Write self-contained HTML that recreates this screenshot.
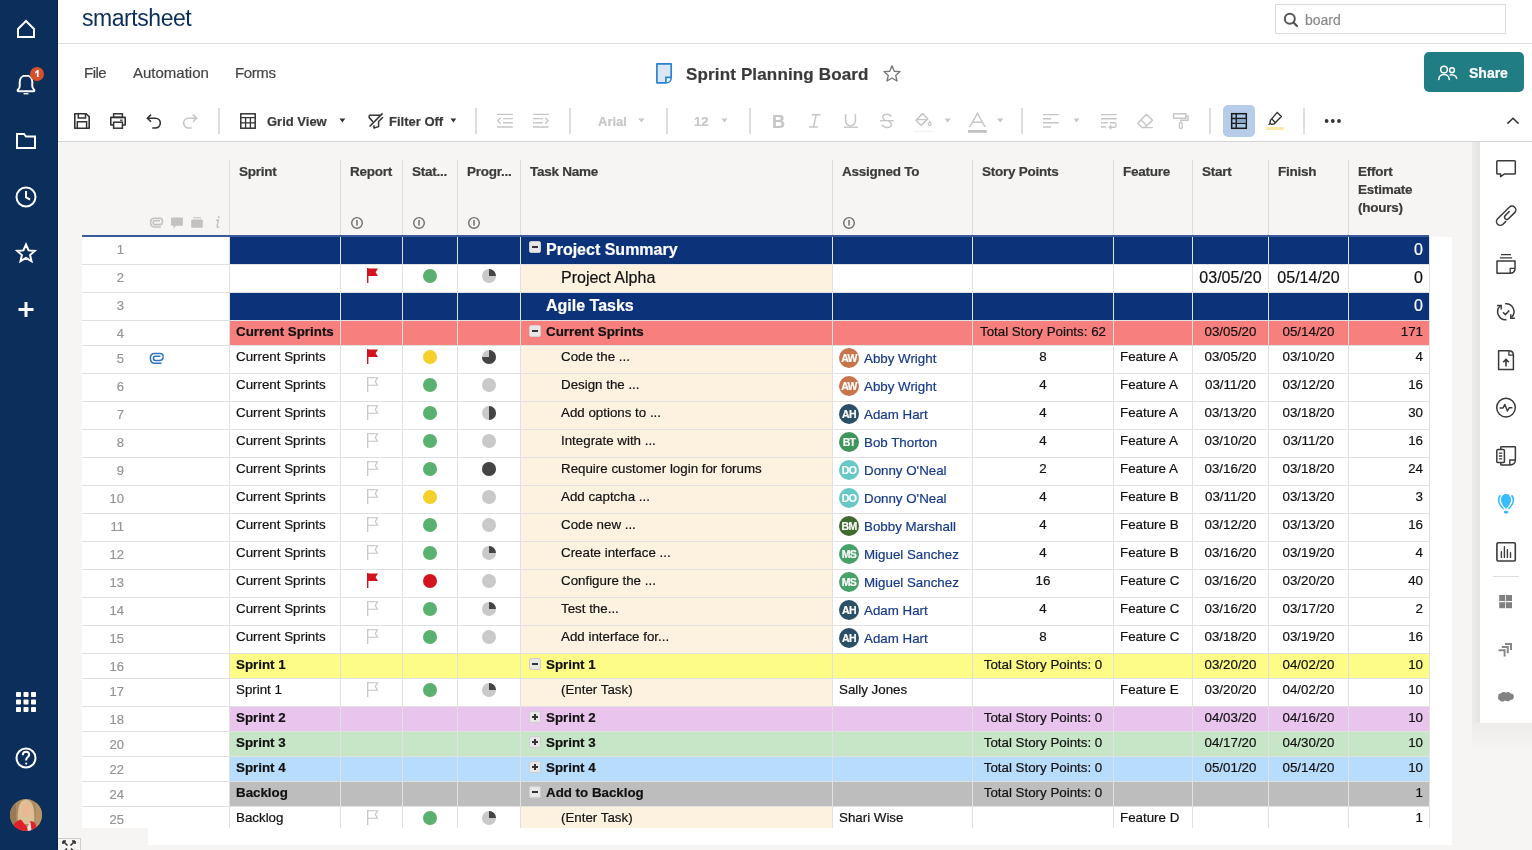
<!DOCTYPE html><html><head><meta charset="utf-8"><title>Sprint Planning Board</title><style>
*{margin:0;padding:0;box-sizing:border-box}
html,body{width:1532px;height:850px;overflow:hidden}
body{position:relative;background:#f6f5f3;font-family:"Liberation Sans",sans-serif;}
.a{position:absolute;display:block}
.t{position:absolute;white-space:nowrap;will-change:transform;-webkit-text-stroke:0.2px currentColor}
</style></head><body>
<div class="a" style="left:0px;top:0px;width:58px;height:850px;background:#0c2e5b;"></div>
<div class="a" style="left:57px;top:0px;width:1px;height:850px;background:#08244c;"></div>
<div class="a" style="left:58px;top:142px;width:1px;height:708px;background:#fdfdfd;"></div>
<svg class="a" style="left:0px;top:0px;" width="58" height="330" viewBox="0 0 58 330">
<path d="M18 29 L26 21 L34 29 L34 37 L18 37 Z" fill="none" stroke="#fff" stroke-width="2" stroke-linejoin="miter"/>
<path d="M26 75.6 C22.4 75.6 19.7 78.3 19.7 82 V86.2 C19.7 87.6 19 88.7 17.9 89.7 C17.3 90.3 17.7 91.3 18.5 91.3 H33.5 C34.3 91.3 34.7 90.3 34.1 89.7 C33 88.7 32.3 87.6 32.3 86.2 V82 C32.3 78.3 29.6 75.6 26 75.6 Z" fill="none" stroke="#fff" stroke-width="2" stroke-linejoin="miter" stroke-width="1.6"/>
<path d="M23.6 93.7 H28.4" stroke="#fff" stroke-width="1.4"/>
<circle cx="37" cy="74" r="7" fill="#d6512b"/><path d="M35.2 71.9 L37.2 70.1 H38.6 V77 H36.9 V72.6 L35.2 73.4 Z" fill="#fff"/>
<path d="M17 134 L24 134 L26 136.5 L35 136.5 L35 148 L17 148 Z" fill="none" stroke="#fff" stroke-width="2" stroke-linejoin="miter" stroke-width="1.8"/>
<circle cx="26" cy="197" r="9.5" fill="none" stroke="#fff" stroke-width="2" stroke-linejoin="miter" stroke-width="1.8"/>
<path d="M26 191 L26 197.5 L30 199.5" fill="none" stroke="#fff" stroke-width="2" stroke-linejoin="miter" stroke-width="1.8"/>
<path d="M26 244.5 L28.6 250.4 L34.8 250.9 L30.1 255 L31.5 261.2 L26 257.9 L20.5 261.2 L21.9 255 L17.2 250.9 L23.4 250.4 Z" fill="none" stroke="#fff" stroke-width="2" stroke-linejoin="miter" stroke-width="1.7"/>
<path d="M26 302 L26 317 M18.5 309.5 L33.5 309.5" stroke="#fff" stroke-width="3"/>
</svg>
<svg class="a" style="left:0px;top:0px;" width="58" height="850" viewBox="0 0 58 850"><rect x="16.0" y="692.0" width="5" height="5" rx="0.8" fill="#fff"/><rect x="16.0" y="699.5" width="5" height="5" rx="0.8" fill="#fff"/><rect x="16.0" y="707.0" width="5" height="5" rx="0.8" fill="#fff"/><rect x="23.5" y="692.0" width="5" height="5" rx="0.8" fill="#fff"/><rect x="23.5" y="699.5" width="5" height="5" rx="0.8" fill="#fff"/><rect x="23.5" y="707.0" width="5" height="5" rx="0.8" fill="#fff"/><rect x="31.0" y="692.0" width="5" height="5" rx="0.8" fill="#fff"/><rect x="31.0" y="699.5" width="5" height="5" rx="0.8" fill="#fff"/><rect x="31.0" y="707.0" width="5" height="5" rx="0.8" fill="#fff"/>
<circle cx="26" cy="758" r="9.5" fill="none" stroke="#fff" stroke-width="2" stroke-linejoin="miter" stroke-width="1.8"/>
<path d="M22.8 755.2 C22.8 753 24.2 751.8 26 751.8 C27.8 751.8 29.2 753 29.2 754.8 C29.2 756.8 26.2 757.2 26.2 759.6 L26.2 760.4" fill="none" stroke="#fff" stroke-width="2" stroke-linejoin="miter" stroke-width="1.8"/>
<circle cx="26.2" cy="763.6" r="1.1" fill="#fff"/>
<defs><clipPath id="av"><circle cx="26" cy="815" r="16"/></clipPath></defs>
<g clip-path="url(#av)">
<rect x="10" y="799" width="32" height="32" fill="#ad8a5f"/>
<rect x="10" y="799" width="6" height="32" fill="#9a7a55"/>
<rect x="36" y="799" width="6" height="32" fill="#b99468"/>
<path d="M18 824 C17 811 18.5 800 26 799.5 C33.5 800 35 811 34 824 Z" fill="#dcc096"/>
<ellipse cx="26.6" cy="810" rx="4.6" ry="7" fill="#e8b894"/>
<path d="M11 832 C12 825 16 820.5 21 819.5 L27.2 827.5 L30.2 821 C33.5 820.5 36.5 823.5 38 832 Z" fill="#e2202c"/>
<path d="M27.2 827.5 L30.2 821 L31.8 832 L28 832 Z" fill="#efe6dd"/>
</g>
</svg>
<div class="a" style="left:58px;top:0px;width:1474px;height:43px;background:#fff;"></div>
<div class="a" style="left:58px;top:43px;width:1474px;height:1px;background:#dedede;"></div>
<div class="t" style="left:82px;top:7px;font-size:23px;line-height:23px;font-weight:400;color:#0c2e5b;letter-spacing:-0.45px;-webkit-text-stroke:0;">smartsheet</div>
<div class="a" style="left:1275px;top:4px;width:231px;height:30px;border:1px solid #dcdcdc;background:#fff"></div>
<svg class="a" style="left:1283px;top:12px;" width="16" height="16" viewBox="0 0 16 16"><circle cx="6.8" cy="6.8" r="5" fill="none" stroke="#555" stroke-width="2"/><path d="M10.5 10.5 L14 14" stroke="#555" stroke-width="2.2" stroke-linecap="round"/></svg>
<div class="t" style="left:1305px;top:13px;font-size:14px;line-height:14px;font-weight:400;color:#8a8a8a;">board</div>
<div class="a" style="left:58px;top:44px;width:1474px;height:97px;background:#fff;"></div>
<div class="a" style="left:58px;top:141px;width:1474px;height:1px;background:#d4d4d4;"></div>
<div class="t" style="left:83.5px;top:65px;font-size:15px;line-height:15px;font-weight:400;color:#444;letter-spacing:-0.5px;">File</div>
<div class="t" style="left:132.5px;top:65px;font-size:15px;line-height:15px;font-weight:400;color:#444;">Automation</div>
<div class="t" style="left:234.5px;top:65px;font-size:15px;line-height:15px;font-weight:400;color:#444;letter-spacing:-0.4px;">Forms</div>
<svg class="a" style="left:650px;top:58px;" width="30" height="30" viewBox="0 0 30 30"><path d="M6.9 5.9 H21.2 V19 Q21.2 24.8 15.5 24.8 H6.9 Z" fill="#dbe6f6" stroke="#2b82d0" stroke-width="1.7" stroke-linejoin="round"/><path d="M16.6 20.2 H20.5 Q20.1 23.9 16.6 24 Z" fill="#fff"/><path d="M15.9 24.8 V19.4 H21.2" fill="none" stroke="#2b82d0" stroke-width="1.6"/></svg>
<div class="t" style="left:685.5px;top:66px;font-size:17px;line-height:17px;font-weight:700;color:#3a3a3a;letter-spacing:0.15px;">Sprint Planning Board</div>
<svg class="a" style="left:882px;top:64px;" width="20" height="20" viewBox="0 0 20 20"><path d="M10 1.8 L12.3 7.2 L18 7.6 L13.7 11.4 L15 17 L10 14 L5 17 L6.3 11.4 L2 7.6 L7.7 7.2 Z" fill="none" stroke="#777" stroke-width="1.4" stroke-linejoin="round"/></svg>
<div class="a" style="left:1424px;top:52px;width:100px;height:40px;border-radius:5px;background:#217d84"></div>
<svg class="a" style="left:1437px;top:63.5px;" width="24" height="18" viewBox="0 0 24 18"><circle cx="7" cy="5.6" r="3.3" fill="none" stroke="#fff" stroke-width="1.5"/><circle cx="15" cy="6.2" r="2.4" fill="none" stroke="#fff" stroke-width="1.5"/><path d="M1.8 15.6 C1.8 12.4 4.2 10.6 7 10.6 C9.8 10.6 12.2 12.4 12.2 15.6" fill="none" stroke="#fff" stroke-width="1.5" stroke-linecap="round"/><path d="M13.2 10.9 C16 10.5 19 11.8 19.8 14.3" fill="none" stroke="#fff" stroke-width="1.5" stroke-linecap="round"/></svg>
<div class="t" style="left:1469px;top:66px;font-size:14px;line-height:14px;font-weight:700;color:#fff;">Share</div>
<!--TOOLBAR-->
<svg class="a" style="left:0px;top:0px;" width="1532" height="142" viewBox="0 0 1532 142">
<path d="M74.8 113.8 H86.2 L89.2 116.8 V128.2 H74.8 Z" fill="none" stroke="#333" stroke-width="1.6" stroke-linejoin="round"/>
<path d="M78.3 113.8 V118 H85.5 V113.8" fill="none" stroke="#333" stroke-width="1.5"/>
<path d="M77.3 128.2 V121.8 H86.6 V128.2" fill="none" stroke="#333" stroke-width="1.5"/>
<rect x="113.6" y="113.8" width="8.8" height="3.6" fill="none" stroke="#333" stroke-width="1.5"/>
<path d="M113.2 125 H110.8 V117.4 H125.2 V125 H122.8" fill="none" stroke="#333" stroke-width="1.6" stroke-linejoin="round"/>
<rect x="113.6" y="122.2" width="8.8" height="6" fill="none" stroke="#333" stroke-width="1.5"/>
<path d="M120 120.2 H122.6" stroke="#333" stroke-width="1.2"/>
<path d="M147.6 118.2 H155.4 A4.9 4.9 0 0 1 155.4 128 H152.2" fill="none" stroke="#333" stroke-width="1.6"/>
<path d="M151 114.6 L147.4 118.2 L151 121.8" fill="none" stroke="#333" stroke-width="1.6"/>
<path d="M196.4 118.2 H188.6 A4.9 4.9 0 0 0 188.6 128 H191.8" fill="none" stroke="#c6c6c6" stroke-width="1.6"/>
<path d="M193 114.6 L196.6 118.2 L193 121.8" fill="none" stroke="#c6c6c6" stroke-width="1.6"/>
<rect x="240.8" y="113.8" width="14.4" height="14.4" fill="none" stroke="#333" stroke-width="1.5"/>
<path d="M240.8 117.6 H255.2 M240.8 122.9 H255.2 M245.6 117.6 V128.2 M250.4 117.6 V128.2" stroke="#333" stroke-width="1.3"/>
<path d="M339.5 118.5 H345.3 L342.4 122.4 Z" fill="#333"/>
<path d="M369.2 115.2 H380" fill="none" stroke="#333" stroke-width="1.5"/>
<path d="M369.2 115.2 V117.6 L373 121.8" fill="none" stroke="#333" stroke-width="1.5"/>
<path d="M369.6 126.5 L382.6 113.4" stroke="#333" stroke-width="1.5"/>
<path d="M382.6 117 V117.5 L378.6 121.6 V126.6 L374 128 V125.2" fill="none" stroke="#333" stroke-width="1.5" stroke-linejoin="round"/>
<path d="M450.5 118.5 H456.3 L453.4 122.4 Z" fill="#333"/>
<path d="M497 114.4 H512.8 M503 118.6 H512.8 M503 122.8 H512.8 M497 127 H512.8" stroke="#c6c6c6" stroke-width="1.4"/>
<path d="M500.6 117.6 L497.8 120.7 L500.6 123.8" fill="none" stroke="#c6c6c6" stroke-width="1.4"/>
<path d="M533 114.4 H548.8 M533 118.6 H542.8 M533 122.8 H542.8 M533 127 H548.8" stroke="#c6c6c6" stroke-width="1.4"/>
<path d="M545.2 117.6 L548 120.7 L545.2 123.8" fill="none" stroke="#c6c6c6" stroke-width="1.4"/>
<path d="M638.3 118.5 H644.5 L641.4 122.4 Z" fill="#c6c6c6"/>
<path d="M721.5 118.5 H727.5 L724.5 122.4 Z" fill="#c6c6c6"/>
<path d="M811.8 114.8 H820.6 M809 127 H817.8 M816.2 114.8 L813.4 127" stroke="#c6c6c6" stroke-width="1.4"/>
<path d="M845.6 114.2 V120.8 A4.9 4.9 0 0 0 855.4 120.8 V114.2" fill="none" stroke="#c6c6c6" stroke-width="1.5"/>
<path d="M843.8 127.2 H857.9" stroke="#c6c6c6" stroke-width="1.4"/>
<path d="M891.2 116.6 C890.4 115 888.9 114.3 886.9 114.3 C884.4 114.3 882.8 115.5 882.8 117.3 C882.8 118.6 883.6 119.4 885 120" fill="none" stroke="#c6c6c6" stroke-width="1.5"/>
<path d="M888.5 121.4 C890.6 122.1 891.4 123.1 891.4 124.4 C891.4 126.3 889.6 127.4 887 127.4 C884.6 127.4 883 126.5 882.2 124.7" fill="none" stroke="#c6c6c6" stroke-width="1.5"/>
<path d="M880 120.7 H893.7" stroke="#c6c6c6" stroke-width="1.4"/>
<path d="M922.6 113.6 L916 120.2 L921.2 125.4 L927.8 118.8 Z" fill="none" stroke="#c6c6c6" stroke-width="1.5" stroke-linejoin="round"/>
<path d="M916.6 119.6 H927.6" stroke="#c6c6c6" stroke-width="1.3"/>
<path d="M929.8 121.4 C929 122.8 928.6 123.6 928.6 124.4 A1.2 1.2 0 0 0 931 124.4 C931 123.6 930.6 122.8 929.8 121.4 Z" fill="none" stroke="#c6c6c6" stroke-width="1.2"/>
<path d="M915 131.4 H933" stroke="#ececec" stroke-width="1.3" stroke-dasharray="1.5 1"/>
<path d="M944.6 118.5 H950.6 L947.6 122.4 Z" fill="#c6c6c6"/>
<path d="M969.6 127 L977.4 113.4 L985.2 127 M972.6 122.2 H982.2" fill="none" stroke="#c6c6c6" stroke-width="1.5"/>
<rect x="968" y="130" width="18.8" height="2.8" fill="#c2c2c2"/>
<path d="M997 118.5 H1003.4 L1000.2 122.4 Z" fill="#c6c6c6"/>
<path d="M1043 114.6 H1058.8 M1043 118.7 H1051 M1043 122.8 H1058.8 M1043 127 H1051" stroke="#c6c6c6" stroke-width="1.4"/>
<path d="M1073.7 118.5 H1079.3 L1076.5 122.4 Z" fill="#c6c6c6"/>
<path d="M1101 114.6 H1116.8 M1101 118.7 H1116.8 M1101 122.8 H1107.6 M1101 127 H1106" stroke="#c6c6c6" stroke-width="1.4"/>
<path d="M1110 122.8 H1114 A2.2 2.2 0 0 1 1114 127.2 H1109.4" fill="none" stroke="#c6c6c6" stroke-width="1.4"/>
<path d="M1111.4 125.2 L1109.2 127.2 L1111.4 129.2" fill="none" stroke="#c6c6c6" stroke-width="1.3"/>
<path d="M1146.4 114.2 L1152.4 120.2 L1144.6 127.6 H1142 L1137.8 123.2 Z" fill="none" stroke="#c6c6c6" stroke-width="1.5" stroke-linejoin="round"/>
<path d="M1140.8 119.6 L1146.4 125.4 M1144.6 127.6 H1152.8" stroke="#c6c6c6" stroke-width="1.4"/>
<rect x="1173.6" y="113.8" width="12.2" height="4.4" fill="none" stroke="#c6c6c6" stroke-width="1.5"/>
<path d="M1185.8 116 H1188 V120.2 H1180.8 V122.6" fill="none" stroke="#c6c6c6" stroke-width="1.4"/>
<rect x="1179.4" y="122.8" width="2.8" height="5.6" rx="0.8" fill="none" stroke="#c6c6c6" stroke-width="1.3"/>
<rect x="1223" y="105" width="32" height="32" rx="5" fill="#b5cde9"/>
<rect x="1231.7" y="113.7" width="14.6" height="14.6" fill="#aac6e6" stroke="#1b1b1b" stroke-width="1.5"/>
<path d="M1231.7 118.5 H1246.3 M1231.7 123.4 H1246.3 M1236.2 113.7 V128.3" stroke="#1b1b1b" stroke-width="1.4"/>
<rect x="1237" y="119.2" width="8.6" height="3.6" fill="#8ba6c7"/>
<path d="M1277.2 112.4 L1281.4 116.6 L1274 124 L1271.4 124.4 L1270 123 L1270.4 120.4 Z" fill="none" stroke="#333" stroke-width="1.4" stroke-linejoin="round"/>
<path d="M1271.8 119 L1275.6 122.8 M1270 123 L1268.6 125" stroke="#333" stroke-width="1.3"/>
<rect x="1266.4" y="127" width="17.2" height="3" fill="#fbeaa6"/>
<circle cx="1326.6" cy="121" r="1.9" fill="#333"/><circle cx="1332.8" cy="121" r="1.9" fill="#333"/><circle cx="1339" cy="121" r="1.9" fill="#333"/>
<path d="M1507.4 123.6 L1513 118.2 L1518.6 123.6" fill="none" stroke="#333" stroke-width="1.5"/>
</svg>
<div class="a" style="left:218px;top:108px;width:2px;height:26px;background:#dedede;"></div>
<div class="a" style="left:475px;top:108px;width:2px;height:26px;background:#dedede;"></div>
<div class="a" style="left:569px;top:108px;width:2px;height:26px;background:#dedede;"></div>
<div class="a" style="left:666px;top:108px;width:2px;height:26px;background:#dedede;"></div>
<div class="a" style="left:749px;top:108px;width:2px;height:26px;background:#dedede;"></div>
<div class="a" style="left:1021px;top:108px;width:2px;height:26px;background:#dedede;"></div>
<div class="a" style="left:1209px;top:108px;width:2px;height:26px;background:#dedede;"></div>
<div class="a" style="left:1303px;top:108px;width:2px;height:26px;background:#dedede;"></div>
<div class="t" style="left:266.5px;top:115px;font-size:13px;line-height:13px;font-weight:700;color:#3a3a3a;">Grid View</div>
<div class="t" style="left:389px;top:115px;font-size:13px;line-height:13px;font-weight:700;color:#3a3a3a;">Filter Off</div>
<div class="t" style="left:597.5px;top:115px;font-size:13px;line-height:13px;font-weight:700;color:#c6c6c6;">Arial</div>
<div class="t" style="left:694px;top:115px;font-size:13px;line-height:13px;font-weight:700;color:#c6c6c6;">12</div>
<div class="t" style="left:772px;top:112.6px;font-size:18px;line-height:18px;font-weight:700;color:#c6c6c6;">B</div>
<!--HEADER-->
<div class="a" style="left:229px;top:160px;width:1px;height:75px;background:#dcdcdc;"></div>
<div class="a" style="left:340px;top:160px;width:1px;height:75px;background:#dcdcdc;"></div>
<div class="a" style="left:402px;top:160px;width:1px;height:75px;background:#dcdcdc;"></div>
<div class="a" style="left:457px;top:160px;width:1px;height:75px;background:#dcdcdc;"></div>
<div class="a" style="left:520px;top:160px;width:1px;height:75px;background:#dcdcdc;"></div>
<div class="a" style="left:832px;top:160px;width:1px;height:75px;background:#dcdcdc;"></div>
<div class="a" style="left:972px;top:160px;width:1px;height:75px;background:#dcdcdc;"></div>
<div class="a" style="left:1113px;top:160px;width:1px;height:75px;background:#dcdcdc;"></div>
<div class="a" style="left:1192px;top:160px;width:1px;height:75px;background:#dcdcdc;"></div>
<div class="a" style="left:1268px;top:160px;width:1px;height:75px;background:#dcdcdc;"></div>
<div class="a" style="left:1348px;top:160px;width:1px;height:75px;background:#dcdcdc;"></div>
<div class="t" style="left:239px;top:165px;font-size:13.5px;line-height:13.5px;font-weight:700;color:#3b3b3b;letter-spacing:-0.25px;">Sprint</div>
<div class="t" style="left:350px;top:165px;font-size:13.5px;line-height:13.5px;font-weight:700;color:#3b3b3b;letter-spacing:-0.25px;">Report</div>
<div class="t" style="left:412px;top:165px;font-size:13.5px;line-height:13.5px;font-weight:700;color:#3b3b3b;letter-spacing:-0.25px;">Stat...</div>
<div class="t" style="left:467px;top:165px;font-size:13.5px;line-height:13.5px;font-weight:700;color:#3b3b3b;letter-spacing:-0.25px;">Progr...</div>
<div class="t" style="left:530px;top:165px;font-size:13.5px;line-height:13.5px;font-weight:700;color:#3b3b3b;letter-spacing:-0.25px;">Task Name</div>
<div class="t" style="left:842px;top:165px;font-size:13.5px;line-height:13.5px;font-weight:700;color:#3b3b3b;letter-spacing:-0.25px;">Assigned To</div>
<div class="t" style="left:982px;top:165px;font-size:13.5px;line-height:13.5px;font-weight:700;color:#3b3b3b;letter-spacing:-0.25px;">Story Points</div>
<div class="t" style="left:1123px;top:165px;font-size:13.5px;line-height:13.5px;font-weight:700;color:#3b3b3b;letter-spacing:-0.25px;">Feature</div>
<div class="t" style="left:1202px;top:165px;font-size:13.5px;line-height:13.5px;font-weight:700;color:#3b3b3b;letter-spacing:-0.25px;">Start</div>
<div class="t" style="left:1278px;top:165px;font-size:13.5px;line-height:13.5px;font-weight:700;color:#3b3b3b;letter-spacing:-0.25px;">Finish</div>
<div class="t" style="left:1358px;top:165px;font-size:13.5px;line-height:13.5px;font-weight:700;color:#3b3b3b;letter-spacing:-0.25px;">Effort</div>
<div class="t" style="left:1358px;top:183px;font-size:13.5px;line-height:13.5px;font-weight:700;color:#3b3b3b;letter-spacing:-0.25px;">Estimate</div>
<div class="t" style="left:1358px;top:201px;font-size:13.5px;line-height:13.5px;font-weight:700;color:#3b3b3b;letter-spacing:-0.25px;">(hours)</div>
<svg class="a" style="left:0px;top:0px;" width="1532" height="240" viewBox="0 0 1532 240"><circle cx="357" cy="222.9" r="5.3" fill="none" stroke="#6e6e6e" stroke-width="1.4"/><rect x="356.25" y="220" width="1.5" height="5.6" fill="#6e6e6e"/><circle cx="419" cy="222.9" r="5.3" fill="none" stroke="#6e6e6e" stroke-width="1.4"/><rect x="418.25" y="220" width="1.5" height="5.6" fill="#6e6e6e"/><circle cx="474" cy="222.9" r="5.3" fill="none" stroke="#6e6e6e" stroke-width="1.4"/><rect x="473.25" y="220" width="1.5" height="5.6" fill="#6e6e6e"/><circle cx="849" cy="222.9" r="5.3" fill="none" stroke="#6e6e6e" stroke-width="1.4"/><rect x="848.25" y="220" width="1.5" height="5.6" fill="#6e6e6e"/>
<path d="M162.6 221.2 C162.6 219.6 161.6 218.2 159.6 218.2 H154.4 C151.8 218.2 150.6 220.2 150.6 222.4 C150.6 224.8 152 227 155 227 H161" fill="none" stroke="#c2c2c2" stroke-width="1.6"/>
<path d="M162.6 221.2 C162.6 223.2 161.4 224.6 159.6 224.6 H155 C154 224.6 153.2 223.6 153.2 222.4 C153.2 221.4 154 220.6 155 220.6 H160" fill="none" stroke="#c2c2c2" stroke-width="1.6"/>
<path d="M171.6 217.4 H182.4 Q182.9 217.4 182.9 217.9 V225.2 Q182.9 225.7 182.4 225.7 H176 L173.4 228.8 L173.6 225.7 H171.6 Q171.1 225.7 171.1 225.2 V217.9 Q171.1 217.4 171.6 217.4 Z" fill="#c2c2c2"/>
<rect x="193" y="217" width="8" height="1.4" fill="#d0d0d0"/>
<rect x="191.2" y="219.4" width="11.6" height="8.4" rx="1.2" fill="#c2c2c2"/>
<path d="M218.6 216.6 L218.8 217.6" stroke="#c2c2c2" stroke-width="1.6" stroke-linecap="round"/>
<path d="M216.4 220.2 H218.4 L217 226.4 Q216.8 227.6 218.8 227" fill="none" stroke="#c2c2c2" stroke-width="1.4" stroke-linecap="round"/>
</svg>
<div class="a" style="left:82px;top:235px;width:1347px;height:2px;background:#3a5a9c;"></div>
<!--ROWS-->
<div class="a" style="left:82px;top:237px;width:1348px;height:591px;background:#fff;"></div>
<div class="a" style="left:1430px;top:237px;width:22px;height:608px;background:#fff;"></div>
<div class="a" style="left:148px;top:828px;width:1304px;height:17px;background:#fff;"></div>
<div class="a" style="left:230px;top:237px;width:1199px;height:27px;background:#0c337a;"></div>
<div class="a" style="left:521px;top:265px;width:311px;height:27px;background:#fdf1e0;"></div>
<div class="a" style="left:230px;top:293px;width:1199px;height:27px;background:#0c337a;"></div>
<div class="a" style="left:230px;top:321px;width:1199px;height:24px;background:#f77f7e;"></div>
<div class="a" style="left:521px;top:346px;width:311px;height:27px;background:#fdf1e0;"></div>
<div class="a" style="left:521px;top:374px;width:311px;height:27px;background:#fdf1e0;"></div>
<div class="a" style="left:521px;top:402px;width:311px;height:27px;background:#fdf1e0;"></div>
<div class="a" style="left:521px;top:430px;width:311px;height:27px;background:#fdf1e0;"></div>
<div class="a" style="left:521px;top:458px;width:311px;height:27px;background:#fdf1e0;"></div>
<div class="a" style="left:521px;top:486px;width:311px;height:27px;background:#fdf1e0;"></div>
<div class="a" style="left:521px;top:514px;width:311px;height:27px;background:#fdf1e0;"></div>
<div class="a" style="left:521px;top:542px;width:311px;height:27px;background:#fdf1e0;"></div>
<div class="a" style="left:521px;top:570px;width:311px;height:27px;background:#fdf1e0;"></div>
<div class="a" style="left:521px;top:598px;width:311px;height:27px;background:#fdf1e0;"></div>
<div class="a" style="left:521px;top:626px;width:311px;height:27px;background:#fdf1e0;"></div>
<div class="a" style="left:230px;top:654px;width:1199px;height:24px;background:#fdfc87;"></div>
<div class="a" style="left:521px;top:679px;width:311px;height:27px;background:#fdf1e0;"></div>
<div class="a" style="left:230px;top:707px;width:1199px;height:24px;background:#e9c5ee;"></div>
<div class="a" style="left:230px;top:732px;width:1199px;height:24px;background:#c7e6c7;"></div>
<div class="a" style="left:230px;top:757px;width:1199px;height:24px;background:#b8dcfb;"></div>
<div class="a" style="left:230px;top:782px;width:1199px;height:24px;background:#bdbdbd;"></div>
<div class="a" style="left:521px;top:807px;width:311px;height:21px;background:#fdf1e0;"></div>
<div class="a" style="left:82px;top:264px;width:1348px;height:1px;background:#e1e1e1;"></div>
<div class="a" style="left:82px;top:292px;width:1348px;height:1px;background:#e1e1e1;"></div>
<div class="a" style="left:82px;top:320px;width:1348px;height:1px;background:#e1e1e1;"></div>
<div class="a" style="left:82px;top:345px;width:1348px;height:1px;background:#e1e1e1;"></div>
<div class="a" style="left:82px;top:373px;width:1348px;height:1px;background:#e1e1e1;"></div>
<div class="a" style="left:82px;top:401px;width:1348px;height:1px;background:#e1e1e1;"></div>
<div class="a" style="left:82px;top:429px;width:1348px;height:1px;background:#e1e1e1;"></div>
<div class="a" style="left:82px;top:457px;width:1348px;height:1px;background:#e1e1e1;"></div>
<div class="a" style="left:82px;top:485px;width:1348px;height:1px;background:#e1e1e1;"></div>
<div class="a" style="left:82px;top:513px;width:1348px;height:1px;background:#e1e1e1;"></div>
<div class="a" style="left:82px;top:541px;width:1348px;height:1px;background:#e1e1e1;"></div>
<div class="a" style="left:82px;top:569px;width:1348px;height:1px;background:#e1e1e1;"></div>
<div class="a" style="left:82px;top:597px;width:1348px;height:1px;background:#e1e1e1;"></div>
<div class="a" style="left:82px;top:625px;width:1348px;height:1px;background:#e1e1e1;"></div>
<div class="a" style="left:82px;top:653px;width:1348px;height:1px;background:#e1e1e1;"></div>
<div class="a" style="left:82px;top:678px;width:1348px;height:1px;background:#e1e1e1;"></div>
<div class="a" style="left:82px;top:706px;width:1348px;height:1px;background:#e1e1e1;"></div>
<div class="a" style="left:82px;top:731px;width:1348px;height:1px;background:#e1e1e1;"></div>
<div class="a" style="left:82px;top:756px;width:1348px;height:1px;background:#e1e1e1;"></div>
<div class="a" style="left:82px;top:781px;width:1348px;height:1px;background:#e1e1e1;"></div>
<div class="a" style="left:82px;top:806px;width:1348px;height:1px;background:#e1e1e1;"></div>
<div class="a" style="left:229px;top:237px;width:1px;height:591px;background:#e1e1e1;"></div>
<div class="a" style="left:340px;top:237px;width:1px;height:591px;background:#e1e1e1;"></div>
<div class="a" style="left:402px;top:237px;width:1px;height:591px;background:#e1e1e1;"></div>
<div class="a" style="left:457px;top:237px;width:1px;height:591px;background:#e1e1e1;"></div>
<div class="a" style="left:520px;top:237px;width:1px;height:591px;background:#e1e1e1;"></div>
<div class="a" style="left:832px;top:237px;width:1px;height:591px;background:#e1e1e1;"></div>
<div class="a" style="left:972px;top:237px;width:1px;height:591px;background:#e1e1e1;"></div>
<div class="a" style="left:1113px;top:237px;width:1px;height:591px;background:#e1e1e1;"></div>
<div class="a" style="left:1192px;top:237px;width:1px;height:591px;background:#e1e1e1;"></div>
<div class="a" style="left:1268px;top:237px;width:1px;height:591px;background:#e1e1e1;"></div>
<div class="a" style="left:1348px;top:237px;width:1px;height:591px;background:#e1e1e1;"></div>
<div class="a" style="left:1429px;top:237px;width:1px;height:591px;background:#e1e1e1;"></div>
<svg class="a" style="left:0px;top:0px;pointer-events:none;" width="1532" height="850" viewBox="0 0 1532 850"><rect x="529.5" y="241.5" width="11" height="11" rx="1.6" fill="#e7e7e7" stroke="#cfcfcf" stroke-width="1"/><rect x="532" y="246" width="6" height="2" fill="#333"/><path d="M367.7 268 V283" stroke="#d2141e" stroke-width="1.4"/><path d="M368 268.6 H378 L375.6 272.3 L378 276 H368 Z" fill="#d2141e"/><circle cx="430" cy="276" r="7" fill="#5ab06f"/><circle cx="489" cy="276" r="7" fill="#c9c9c9"/><path d="M489 276 V269 A7 7 0 0 1 496 276 Z" fill="#444"/><rect x="529.5" y="325.5" width="11" height="11" rx="1.6" fill="#e7e7e7" stroke="#cfcfcf" stroke-width="1"/><rect x="532" y="330" width="6" height="2" fill="#333"/><path d="M367.7 349 V364" stroke="#d2141e" stroke-width="1.4"/><path d="M368 349.6 H378 L375.6 353.3 L378 357 H368 Z" fill="#d2141e"/><circle cx="430" cy="357" r="7" fill="#f5cf2a"/><circle cx="489" cy="357" r="7" fill="#c9c9c9"/><path d="M489 357 V350 A7 7 0 1 1 482 357 Z" fill="#444"/><circle cx="849" cy="358" r="10" fill="#c8754c"/><path d="M367.7 377 V392" stroke="#c4c4c4" stroke-width="1.2"/><path d="M367.7 377.8 H377.5 L375.3 381.5 L377.5 385.2 H367.7" fill="none" stroke="#c4c4c4" stroke-width="1.1"/><circle cx="430" cy="385" r="7" fill="#5ab06f"/><circle cx="489" cy="385" r="7" fill="#c9c9c9"/><circle cx="849" cy="386" r="10" fill="#c8754c"/><path d="M367.7 405 V420" stroke="#c4c4c4" stroke-width="1.2"/><path d="M367.7 405.8 H377.5 L375.3 409.5 L377.5 413.2 H367.7" fill="none" stroke="#c4c4c4" stroke-width="1.1"/><circle cx="430" cy="413" r="7" fill="#5ab06f"/><circle cx="489" cy="413" r="7" fill="#c9c9c9"/><path d="M489 406 A7 7 0 0 1 489 420 Z" fill="#444"/><circle cx="849" cy="414" r="10" fill="#2b4f67"/><path d="M367.7 433 V448" stroke="#c4c4c4" stroke-width="1.2"/><path d="M367.7 433.8 H377.5 L375.3 437.5 L377.5 441.2 H367.7" fill="none" stroke="#c4c4c4" stroke-width="1.1"/><circle cx="430" cy="441" r="7" fill="#5ab06f"/><circle cx="489" cy="441" r="7" fill="#c9c9c9"/><circle cx="849" cy="442" r="10" fill="#3f965b"/><path d="M367.7 461 V476" stroke="#c4c4c4" stroke-width="1.2"/><path d="M367.7 461.8 H377.5 L375.3 465.5 L377.5 469.2 H367.7" fill="none" stroke="#c4c4c4" stroke-width="1.1"/><circle cx="430" cy="469" r="7" fill="#5ab06f"/><circle cx="489" cy="469" r="7" fill="#c9c9c9"/><circle cx="489" cy="469" r="7" fill="#444"/><circle cx="849" cy="470" r="10" fill="#68c8c8"/><path d="M367.7 489 V504" stroke="#c4c4c4" stroke-width="1.2"/><path d="M367.7 489.8 H377.5 L375.3 493.5 L377.5 497.2 H367.7" fill="none" stroke="#c4c4c4" stroke-width="1.1"/><circle cx="430" cy="497" r="7" fill="#f5cf2a"/><circle cx="489" cy="497" r="7" fill="#c9c9c9"/><circle cx="849" cy="498" r="10" fill="#68c8c8"/><path d="M367.7 517 V532" stroke="#c4c4c4" stroke-width="1.2"/><path d="M367.7 517.8 H377.5 L375.3 521.5 L377.5 525.2 H367.7" fill="none" stroke="#c4c4c4" stroke-width="1.1"/><circle cx="430" cy="525" r="7" fill="#5ab06f"/><circle cx="489" cy="525" r="7" fill="#c9c9c9"/><circle cx="849" cy="526" r="10" fill="#3f6b2f"/><path d="M367.7 545 V560" stroke="#c4c4c4" stroke-width="1.2"/><path d="M367.7 545.8 H377.5 L375.3 549.5 L377.5 553.2 H367.7" fill="none" stroke="#c4c4c4" stroke-width="1.1"/><circle cx="430" cy="553" r="7" fill="#5ab06f"/><circle cx="489" cy="553" r="7" fill="#c9c9c9"/><path d="M489 553 V546 A7 7 0 0 1 496 553 Z" fill="#444"/><circle cx="849" cy="554" r="10" fill="#48a169"/><path d="M367.7 573 V588" stroke="#d2141e" stroke-width="1.4"/><path d="M368 573.6 H378 L375.6 577.3 L378 581 H368 Z" fill="#d2141e"/><circle cx="430" cy="581" r="7" fill="#d2141e"/><circle cx="489" cy="581" r="7" fill="#c9c9c9"/><circle cx="849" cy="582" r="10" fill="#48a169"/><path d="M367.7 601 V616" stroke="#c4c4c4" stroke-width="1.2"/><path d="M367.7 601.8 H377.5 L375.3 605.5 L377.5 609.2 H367.7" fill="none" stroke="#c4c4c4" stroke-width="1.1"/><circle cx="430" cy="609" r="7" fill="#5ab06f"/><circle cx="489" cy="609" r="7" fill="#c9c9c9"/><path d="M489 609 V602 A7 7 0 0 1 496 609 Z" fill="#444"/><circle cx="849" cy="610" r="10" fill="#2b4f67"/><path d="M367.7 629 V644" stroke="#c4c4c4" stroke-width="1.2"/><path d="M367.7 629.8 H377.5 L375.3 633.5 L377.5 637.2 H367.7" fill="none" stroke="#c4c4c4" stroke-width="1.1"/><circle cx="430" cy="637" r="7" fill="#5ab06f"/><circle cx="489" cy="637" r="7" fill="#c9c9c9"/><circle cx="849" cy="638" r="10" fill="#2b4f67"/><rect x="529.5" y="658.5" width="11" height="11" rx="1.6" fill="#e7e7e7" stroke="#cfcfcf" stroke-width="1"/><rect x="532" y="663" width="6" height="2" fill="#333"/><path d="M367.7 682 V697" stroke="#c4c4c4" stroke-width="1.2"/><path d="M367.7 682.8 H377.5 L375.3 686.5 L377.5 690.2 H367.7" fill="none" stroke="#c4c4c4" stroke-width="1.1"/><circle cx="430" cy="690" r="7" fill="#5ab06f"/><circle cx="489" cy="690" r="7" fill="#c9c9c9"/><path d="M489 690 V683 A7 7 0 0 1 496 690 Z" fill="#444"/><rect x="529.5" y="711.5" width="11" height="11" rx="1.6" fill="#e7e7e7" stroke="#cfcfcf" stroke-width="1"/><rect x="532" y="716" width="6" height="2" fill="#333"/><rect x="534" y="714" width="2" height="6" fill="#333"/><rect x="529.5" y="736.5" width="11" height="11" rx="1.6" fill="#e7e7e7" stroke="#cfcfcf" stroke-width="1"/><rect x="532" y="741" width="6" height="2" fill="#333"/><rect x="534" y="739" width="2" height="6" fill="#333"/><rect x="529.5" y="761.5" width="11" height="11" rx="1.6" fill="#e7e7e7" stroke="#cfcfcf" stroke-width="1"/><rect x="532" y="766" width="6" height="2" fill="#333"/><rect x="534" y="764" width="2" height="6" fill="#333"/><rect x="529.5" y="786.5" width="11" height="11" rx="1.6" fill="#e7e7e7" stroke="#cfcfcf" stroke-width="1"/><rect x="532" y="791" width="6" height="2" fill="#333"/><path d="M367.7 810 V825" stroke="#c4c4c4" stroke-width="1.2"/><path d="M367.7 810.8 H377.5 L375.3 814.5 L377.5 818.2 H367.7" fill="none" stroke="#c4c4c4" stroke-width="1.1"/><circle cx="430" cy="818" r="7" fill="#5ab06f"/><circle cx="489" cy="818" r="7" fill="#c9c9c9"/><path d="M489 818 V811 A7 7 0 0 1 496 818 Z" fill="#444"/><path d="M163.2 356.6 C163.2 354.6 162 353.4 160 353.4 H154.6 C151.8 353.4 150.4 355.6 150.4 358.2 C150.4 361 152 363.2 155 363.2 H161.6" fill="none" stroke="#2f74c2" stroke-width="1.5"/><path d="M163.2 356.6 C163.2 358.8 162 360.4 160 360.4 H155.4 C154.2 360.4 153.4 359.4 153.4 358.2 C153.4 357 154.2 356.2 155.4 356.2 H160.4" fill="none" stroke="#2f74c2" stroke-width="1.5"/></svg>
<div class="t" style="left:82px;top:243.0px;font-size:13px;line-height:13px;font-weight:400;color:#959595;width:42px;text-align:right;">1</div>
<div class="t" style="left:546px;top:242px;font-size:16px;line-height:16px;font-weight:700;color:#fff;">Project Summary</div>
<div class="t" style="left:1349px;top:242px;font-size:16px;line-height:16px;font-weight:400;color:#fff;width:74px;text-align:right;">0</div>
<div class="t" style="left:82px;top:271.0px;font-size:13px;line-height:13px;font-weight:400;color:#959595;width:42px;text-align:right;">2</div>
<div class="t" style="left:561px;top:269.6px;font-size:16px;line-height:16px;font-weight:400;color:#111;">Project Alpha</div>
<div class="t" style="left:1193px;top:269.6px;font-size:16px;line-height:16px;font-weight:400;color:#111;width:75px;text-align:center;">03/05/20</div>
<div class="t" style="left:1269px;top:269.6px;font-size:16px;line-height:16px;font-weight:400;color:#111;width:79px;text-align:center;">05/14/20</div>
<div class="t" style="left:1349px;top:269.6px;font-size:16px;line-height:16px;font-weight:400;color:#111;width:74px;text-align:right;">0</div>
<div class="t" style="left:82px;top:299.0px;font-size:13px;line-height:13px;font-weight:400;color:#959595;width:42px;text-align:right;">3</div>
<div class="t" style="left:546px;top:298px;font-size:16px;line-height:16px;font-weight:700;color:#fff;">Agile Tasks</div>
<div class="t" style="left:1349px;top:298px;font-size:16px;line-height:16px;font-weight:400;color:#fff;width:74px;text-align:right;">0</div>
<div class="t" style="left:82px;top:327.0px;font-size:13px;line-height:13px;font-weight:400;color:#959595;width:42px;text-align:right;">4</div>
<div class="t" style="left:236px;top:324.6px;font-size:13.33px;line-height:13.33px;font-weight:700;color:#111;">Current Sprints</div>
<div class="t" style="left:546px;top:324.6px;font-size:13.33px;line-height:13.33px;font-weight:700;color:#111;">Current Sprints</div>
<div class="t" style="left:973px;top:324.6px;font-size:13.33px;line-height:13.33px;font-weight:400;color:#111;width:140px;text-align:center;">Total Story Points: 62</div>
<div class="t" style="left:1193px;top:324.6px;font-size:13.33px;line-height:13.33px;font-weight:400;color:#111;width:75px;text-align:center;">03/05/20</div>
<div class="t" style="left:1269px;top:324.6px;font-size:13.33px;line-height:13.33px;font-weight:400;color:#111;width:79px;text-align:center;">05/14/20</div>
<div class="t" style="left:1349px;top:324.6px;font-size:13.33px;line-height:13.33px;font-weight:400;color:#111;width:74px;text-align:right;">171</div>
<div class="t" style="left:82px;top:352.0px;font-size:13px;line-height:13px;font-weight:400;color:#959595;width:42px;text-align:right;">5</div>
<div class="t" style="left:236px;top:350px;font-size:13.33px;line-height:13.33px;font-weight:400;color:#111;">Current Sprints</div>
<div class="t" style="left:561px;top:350px;font-size:13.33px;line-height:13.33px;font-weight:400;color:#111;">Code the ...</div>
<div class="t" style="left:839.4px;top:353px;font-size:10.5px;line-height:10.5px;font-weight:700;color:#fff;width:20px;text-align:center;letter-spacing:-0.7px;">AW</div>
<div class="t" style="left:864px;top:352px;font-size:13.33px;line-height:13.33px;font-weight:400;color:#173a8a;">Abby Wright</div>
<div class="t" style="left:973px;top:350px;font-size:13.33px;line-height:13.33px;font-weight:400;color:#111;width:140px;text-align:center;">8</div>
<div class="t" style="left:1120px;top:350px;font-size:13.33px;line-height:13.33px;font-weight:400;color:#111;">Feature A</div>
<div class="t" style="left:1193px;top:350px;font-size:13.33px;line-height:13.33px;font-weight:400;color:#111;width:75px;text-align:center;">03/05/20</div>
<div class="t" style="left:1269px;top:350px;font-size:13.33px;line-height:13.33px;font-weight:400;color:#111;width:79px;text-align:center;">03/10/20</div>
<div class="t" style="left:1349px;top:350px;font-size:13.33px;line-height:13.33px;font-weight:400;color:#111;width:74px;text-align:right;">4</div>
<div class="t" style="left:82px;top:380.0px;font-size:13px;line-height:13px;font-weight:400;color:#959595;width:42px;text-align:right;">6</div>
<div class="t" style="left:236px;top:378px;font-size:13.33px;line-height:13.33px;font-weight:400;color:#111;">Current Sprints</div>
<div class="t" style="left:561px;top:378px;font-size:13.33px;line-height:13.33px;font-weight:400;color:#111;">Design the ...</div>
<div class="t" style="left:839.4px;top:381px;font-size:10.5px;line-height:10.5px;font-weight:700;color:#fff;width:20px;text-align:center;letter-spacing:-0.7px;">AW</div>
<div class="t" style="left:864px;top:380px;font-size:13.33px;line-height:13.33px;font-weight:400;color:#173a8a;">Abby Wright</div>
<div class="t" style="left:973px;top:378px;font-size:13.33px;line-height:13.33px;font-weight:400;color:#111;width:140px;text-align:center;">4</div>
<div class="t" style="left:1120px;top:378px;font-size:13.33px;line-height:13.33px;font-weight:400;color:#111;">Feature A</div>
<div class="t" style="left:1193px;top:378px;font-size:13.33px;line-height:13.33px;font-weight:400;color:#111;width:75px;text-align:center;">03/11/20</div>
<div class="t" style="left:1269px;top:378px;font-size:13.33px;line-height:13.33px;font-weight:400;color:#111;width:79px;text-align:center;">03/12/20</div>
<div class="t" style="left:1349px;top:378px;font-size:13.33px;line-height:13.33px;font-weight:400;color:#111;width:74px;text-align:right;">16</div>
<div class="t" style="left:82px;top:408.0px;font-size:13px;line-height:13px;font-weight:400;color:#959595;width:42px;text-align:right;">7</div>
<div class="t" style="left:236px;top:406px;font-size:13.33px;line-height:13.33px;font-weight:400;color:#111;">Current Sprints</div>
<div class="t" style="left:561px;top:406px;font-size:13.33px;line-height:13.33px;font-weight:400;color:#111;">Add options to ...</div>
<div class="t" style="left:839.4px;top:409px;font-size:10.5px;line-height:10.5px;font-weight:700;color:#fff;width:20px;text-align:center;letter-spacing:-0.7px;">AH</div>
<div class="t" style="left:864px;top:408px;font-size:13.33px;line-height:13.33px;font-weight:400;color:#173a8a;">Adam Hart</div>
<div class="t" style="left:973px;top:406px;font-size:13.33px;line-height:13.33px;font-weight:400;color:#111;width:140px;text-align:center;">4</div>
<div class="t" style="left:1120px;top:406px;font-size:13.33px;line-height:13.33px;font-weight:400;color:#111;">Feature A</div>
<div class="t" style="left:1193px;top:406px;font-size:13.33px;line-height:13.33px;font-weight:400;color:#111;width:75px;text-align:center;">03/13/20</div>
<div class="t" style="left:1269px;top:406px;font-size:13.33px;line-height:13.33px;font-weight:400;color:#111;width:79px;text-align:center;">03/18/20</div>
<div class="t" style="left:1349px;top:406px;font-size:13.33px;line-height:13.33px;font-weight:400;color:#111;width:74px;text-align:right;">30</div>
<div class="t" style="left:82px;top:436.0px;font-size:13px;line-height:13px;font-weight:400;color:#959595;width:42px;text-align:right;">8</div>
<div class="t" style="left:236px;top:434px;font-size:13.33px;line-height:13.33px;font-weight:400;color:#111;">Current Sprints</div>
<div class="t" style="left:561px;top:434px;font-size:13.33px;line-height:13.33px;font-weight:400;color:#111;">Integrate with ...</div>
<div class="t" style="left:839.4px;top:437px;font-size:10.5px;line-height:10.5px;font-weight:700;color:#fff;width:20px;text-align:center;letter-spacing:-0.7px;">BT</div>
<div class="t" style="left:864px;top:436px;font-size:13.33px;line-height:13.33px;font-weight:400;color:#173a8a;">Bob Thorton</div>
<div class="t" style="left:973px;top:434px;font-size:13.33px;line-height:13.33px;font-weight:400;color:#111;width:140px;text-align:center;">4</div>
<div class="t" style="left:1120px;top:434px;font-size:13.33px;line-height:13.33px;font-weight:400;color:#111;">Feature A</div>
<div class="t" style="left:1193px;top:434px;font-size:13.33px;line-height:13.33px;font-weight:400;color:#111;width:75px;text-align:center;">03/10/20</div>
<div class="t" style="left:1269px;top:434px;font-size:13.33px;line-height:13.33px;font-weight:400;color:#111;width:79px;text-align:center;">03/11/20</div>
<div class="t" style="left:1349px;top:434px;font-size:13.33px;line-height:13.33px;font-weight:400;color:#111;width:74px;text-align:right;">16</div>
<div class="t" style="left:82px;top:464.0px;font-size:13px;line-height:13px;font-weight:400;color:#959595;width:42px;text-align:right;">9</div>
<div class="t" style="left:236px;top:462px;font-size:13.33px;line-height:13.33px;font-weight:400;color:#111;">Current Sprints</div>
<div class="t" style="left:561px;top:462px;font-size:13.33px;line-height:13.33px;font-weight:400;color:#111;">Require customer login for forums</div>
<div class="t" style="left:839.4px;top:465px;font-size:10.5px;line-height:10.5px;font-weight:700;color:#fff;width:20px;text-align:center;letter-spacing:-0.7px;">DO</div>
<div class="t" style="left:864px;top:464px;font-size:13.33px;line-height:13.33px;font-weight:400;color:#173a8a;">Donny O'Neal</div>
<div class="t" style="left:973px;top:462px;font-size:13.33px;line-height:13.33px;font-weight:400;color:#111;width:140px;text-align:center;">2</div>
<div class="t" style="left:1120px;top:462px;font-size:13.33px;line-height:13.33px;font-weight:400;color:#111;">Feature A</div>
<div class="t" style="left:1193px;top:462px;font-size:13.33px;line-height:13.33px;font-weight:400;color:#111;width:75px;text-align:center;">03/16/20</div>
<div class="t" style="left:1269px;top:462px;font-size:13.33px;line-height:13.33px;font-weight:400;color:#111;width:79px;text-align:center;">03/18/20</div>
<div class="t" style="left:1349px;top:462px;font-size:13.33px;line-height:13.33px;font-weight:400;color:#111;width:74px;text-align:right;">24</div>
<div class="t" style="left:82px;top:492.0px;font-size:13px;line-height:13px;font-weight:400;color:#959595;width:42px;text-align:right;">10</div>
<div class="t" style="left:236px;top:490px;font-size:13.33px;line-height:13.33px;font-weight:400;color:#111;">Current Sprints</div>
<div class="t" style="left:561px;top:490px;font-size:13.33px;line-height:13.33px;font-weight:400;color:#111;">Add captcha ...</div>
<div class="t" style="left:839.4px;top:493px;font-size:10.5px;line-height:10.5px;font-weight:700;color:#fff;width:20px;text-align:center;letter-spacing:-0.7px;">DO</div>
<div class="t" style="left:864px;top:492px;font-size:13.33px;line-height:13.33px;font-weight:400;color:#173a8a;">Donny O'Neal</div>
<div class="t" style="left:973px;top:490px;font-size:13.33px;line-height:13.33px;font-weight:400;color:#111;width:140px;text-align:center;">4</div>
<div class="t" style="left:1120px;top:490px;font-size:13.33px;line-height:13.33px;font-weight:400;color:#111;">Feature B</div>
<div class="t" style="left:1193px;top:490px;font-size:13.33px;line-height:13.33px;font-weight:400;color:#111;width:75px;text-align:center;">03/11/20</div>
<div class="t" style="left:1269px;top:490px;font-size:13.33px;line-height:13.33px;font-weight:400;color:#111;width:79px;text-align:center;">03/13/20</div>
<div class="t" style="left:1349px;top:490px;font-size:13.33px;line-height:13.33px;font-weight:400;color:#111;width:74px;text-align:right;">3</div>
<div class="t" style="left:82px;top:520.0px;font-size:13px;line-height:13px;font-weight:400;color:#959595;width:42px;text-align:right;">11</div>
<div class="t" style="left:236px;top:518px;font-size:13.33px;line-height:13.33px;font-weight:400;color:#111;">Current Sprints</div>
<div class="t" style="left:561px;top:518px;font-size:13.33px;line-height:13.33px;font-weight:400;color:#111;">Code new ...</div>
<div class="t" style="left:839.4px;top:521px;font-size:10.5px;line-height:10.5px;font-weight:700;color:#fff;width:20px;text-align:center;letter-spacing:-0.7px;">BM</div>
<div class="t" style="left:864px;top:520px;font-size:13.33px;line-height:13.33px;font-weight:400;color:#173a8a;">Bobby Marshall</div>
<div class="t" style="left:973px;top:518px;font-size:13.33px;line-height:13.33px;font-weight:400;color:#111;width:140px;text-align:center;">4</div>
<div class="t" style="left:1120px;top:518px;font-size:13.33px;line-height:13.33px;font-weight:400;color:#111;">Feature B</div>
<div class="t" style="left:1193px;top:518px;font-size:13.33px;line-height:13.33px;font-weight:400;color:#111;width:75px;text-align:center;">03/12/20</div>
<div class="t" style="left:1269px;top:518px;font-size:13.33px;line-height:13.33px;font-weight:400;color:#111;width:79px;text-align:center;">03/13/20</div>
<div class="t" style="left:1349px;top:518px;font-size:13.33px;line-height:13.33px;font-weight:400;color:#111;width:74px;text-align:right;">16</div>
<div class="t" style="left:82px;top:548.0px;font-size:13px;line-height:13px;font-weight:400;color:#959595;width:42px;text-align:right;">12</div>
<div class="t" style="left:236px;top:546px;font-size:13.33px;line-height:13.33px;font-weight:400;color:#111;">Current Sprints</div>
<div class="t" style="left:561px;top:546px;font-size:13.33px;line-height:13.33px;font-weight:400;color:#111;">Create interface ...</div>
<div class="t" style="left:839.4px;top:549px;font-size:10.5px;line-height:10.5px;font-weight:700;color:#fff;width:20px;text-align:center;letter-spacing:-0.7px;">MS</div>
<div class="t" style="left:864px;top:548px;font-size:13.33px;line-height:13.33px;font-weight:400;color:#173a8a;">Miguel Sanchez</div>
<div class="t" style="left:973px;top:546px;font-size:13.33px;line-height:13.33px;font-weight:400;color:#111;width:140px;text-align:center;">4</div>
<div class="t" style="left:1120px;top:546px;font-size:13.33px;line-height:13.33px;font-weight:400;color:#111;">Feature B</div>
<div class="t" style="left:1193px;top:546px;font-size:13.33px;line-height:13.33px;font-weight:400;color:#111;width:75px;text-align:center;">03/16/20</div>
<div class="t" style="left:1269px;top:546px;font-size:13.33px;line-height:13.33px;font-weight:400;color:#111;width:79px;text-align:center;">03/19/20</div>
<div class="t" style="left:1349px;top:546px;font-size:13.33px;line-height:13.33px;font-weight:400;color:#111;width:74px;text-align:right;">4</div>
<div class="t" style="left:82px;top:576.0px;font-size:13px;line-height:13px;font-weight:400;color:#959595;width:42px;text-align:right;">13</div>
<div class="t" style="left:236px;top:574px;font-size:13.33px;line-height:13.33px;font-weight:400;color:#111;">Current Sprints</div>
<div class="t" style="left:561px;top:574px;font-size:13.33px;line-height:13.33px;font-weight:400;color:#111;">Configure the ...</div>
<div class="t" style="left:839.4px;top:577px;font-size:10.5px;line-height:10.5px;font-weight:700;color:#fff;width:20px;text-align:center;letter-spacing:-0.7px;">MS</div>
<div class="t" style="left:864px;top:576px;font-size:13.33px;line-height:13.33px;font-weight:400;color:#173a8a;">Miguel Sanchez</div>
<div class="t" style="left:973px;top:574px;font-size:13.33px;line-height:13.33px;font-weight:400;color:#111;width:140px;text-align:center;">16</div>
<div class="t" style="left:1120px;top:574px;font-size:13.33px;line-height:13.33px;font-weight:400;color:#111;">Feature C</div>
<div class="t" style="left:1193px;top:574px;font-size:13.33px;line-height:13.33px;font-weight:400;color:#111;width:75px;text-align:center;">03/16/20</div>
<div class="t" style="left:1269px;top:574px;font-size:13.33px;line-height:13.33px;font-weight:400;color:#111;width:79px;text-align:center;">03/20/20</div>
<div class="t" style="left:1349px;top:574px;font-size:13.33px;line-height:13.33px;font-weight:400;color:#111;width:74px;text-align:right;">40</div>
<div class="t" style="left:82px;top:604.0px;font-size:13px;line-height:13px;font-weight:400;color:#959595;width:42px;text-align:right;">14</div>
<div class="t" style="left:236px;top:602px;font-size:13.33px;line-height:13.33px;font-weight:400;color:#111;">Current Sprints</div>
<div class="t" style="left:561px;top:602px;font-size:13.33px;line-height:13.33px;font-weight:400;color:#111;">Test the...</div>
<div class="t" style="left:839.4px;top:605px;font-size:10.5px;line-height:10.5px;font-weight:700;color:#fff;width:20px;text-align:center;letter-spacing:-0.7px;">AH</div>
<div class="t" style="left:864px;top:604px;font-size:13.33px;line-height:13.33px;font-weight:400;color:#173a8a;">Adam Hart</div>
<div class="t" style="left:973px;top:602px;font-size:13.33px;line-height:13.33px;font-weight:400;color:#111;width:140px;text-align:center;">4</div>
<div class="t" style="left:1120px;top:602px;font-size:13.33px;line-height:13.33px;font-weight:400;color:#111;">Feature C</div>
<div class="t" style="left:1193px;top:602px;font-size:13.33px;line-height:13.33px;font-weight:400;color:#111;width:75px;text-align:center;">03/16/20</div>
<div class="t" style="left:1269px;top:602px;font-size:13.33px;line-height:13.33px;font-weight:400;color:#111;width:79px;text-align:center;">03/17/20</div>
<div class="t" style="left:1349px;top:602px;font-size:13.33px;line-height:13.33px;font-weight:400;color:#111;width:74px;text-align:right;">2</div>
<div class="t" style="left:82px;top:632.0px;font-size:13px;line-height:13px;font-weight:400;color:#959595;width:42px;text-align:right;">15</div>
<div class="t" style="left:236px;top:630px;font-size:13.33px;line-height:13.33px;font-weight:400;color:#111;">Current Sprints</div>
<div class="t" style="left:561px;top:630px;font-size:13.33px;line-height:13.33px;font-weight:400;color:#111;">Add interface for...</div>
<div class="t" style="left:839.4px;top:633px;font-size:10.5px;line-height:10.5px;font-weight:700;color:#fff;width:20px;text-align:center;letter-spacing:-0.7px;">AH</div>
<div class="t" style="left:864px;top:632px;font-size:13.33px;line-height:13.33px;font-weight:400;color:#173a8a;">Adam Hart</div>
<div class="t" style="left:973px;top:630px;font-size:13.33px;line-height:13.33px;font-weight:400;color:#111;width:140px;text-align:center;">8</div>
<div class="t" style="left:1120px;top:630px;font-size:13.33px;line-height:13.33px;font-weight:400;color:#111;">Feature C</div>
<div class="t" style="left:1193px;top:630px;font-size:13.33px;line-height:13.33px;font-weight:400;color:#111;width:75px;text-align:center;">03/18/20</div>
<div class="t" style="left:1269px;top:630px;font-size:13.33px;line-height:13.33px;font-weight:400;color:#111;width:79px;text-align:center;">03/19/20</div>
<div class="t" style="left:1349px;top:630px;font-size:13.33px;line-height:13.33px;font-weight:400;color:#111;width:74px;text-align:right;">16</div>
<div class="t" style="left:82px;top:660.0px;font-size:13px;line-height:13px;font-weight:400;color:#959595;width:42px;text-align:right;">16</div>
<div class="t" style="left:236px;top:657.6px;font-size:13.33px;line-height:13.33px;font-weight:700;color:#111;">Sprint 1</div>
<div class="t" style="left:546px;top:657.6px;font-size:13.33px;line-height:13.33px;font-weight:700;color:#111;">Sprint 1</div>
<div class="t" style="left:973px;top:657.6px;font-size:13.33px;line-height:13.33px;font-weight:400;color:#111;width:140px;text-align:center;">Total Story Points: 0</div>
<div class="t" style="left:1193px;top:657.6px;font-size:13.33px;line-height:13.33px;font-weight:400;color:#111;width:75px;text-align:center;">03/20/20</div>
<div class="t" style="left:1269px;top:657.6px;font-size:13.33px;line-height:13.33px;font-weight:400;color:#111;width:79px;text-align:center;">04/02/20</div>
<div class="t" style="left:1349px;top:657.6px;font-size:13.33px;line-height:13.33px;font-weight:400;color:#111;width:74px;text-align:right;">10</div>
<div class="t" style="left:82px;top:685.0px;font-size:13px;line-height:13px;font-weight:400;color:#959595;width:42px;text-align:right;">17</div>
<div class="t" style="left:236px;top:683px;font-size:13.33px;line-height:13.33px;font-weight:400;color:#111;">Sprint 1</div>
<div class="t" style="left:561px;top:683px;font-size:13.33px;line-height:13.33px;font-weight:400;color:#111;">(Enter Task)</div>
<div class="t" style="left:839px;top:683px;font-size:13.33px;line-height:13.33px;font-weight:400;color:#111;">Sally Jones</div>
<div class="t" style="left:973px;top:683px;font-size:13.33px;line-height:13.33px;font-weight:400;color:#111;width:140px;text-align:center;"></div>
<div class="t" style="left:1120px;top:683px;font-size:13.33px;line-height:13.33px;font-weight:400;color:#111;">Feature E</div>
<div class="t" style="left:1193px;top:683px;font-size:13.33px;line-height:13.33px;font-weight:400;color:#111;width:75px;text-align:center;">03/20/20</div>
<div class="t" style="left:1269px;top:683px;font-size:13.33px;line-height:13.33px;font-weight:400;color:#111;width:79px;text-align:center;">04/02/20</div>
<div class="t" style="left:1349px;top:683px;font-size:13.33px;line-height:13.33px;font-weight:400;color:#111;width:74px;text-align:right;">10</div>
<div class="t" style="left:82px;top:713.0px;font-size:13px;line-height:13px;font-weight:400;color:#959595;width:42px;text-align:right;">18</div>
<div class="t" style="left:236px;top:710.6px;font-size:13.33px;line-height:13.33px;font-weight:700;color:#111;">Sprint 2</div>
<div class="t" style="left:546px;top:710.6px;font-size:13.33px;line-height:13.33px;font-weight:700;color:#111;">Sprint 2</div>
<div class="t" style="left:973px;top:710.6px;font-size:13.33px;line-height:13.33px;font-weight:400;color:#111;width:140px;text-align:center;">Total Story Points: 0</div>
<div class="t" style="left:1193px;top:710.6px;font-size:13.33px;line-height:13.33px;font-weight:400;color:#111;width:75px;text-align:center;">04/03/20</div>
<div class="t" style="left:1269px;top:710.6px;font-size:13.33px;line-height:13.33px;font-weight:400;color:#111;width:79px;text-align:center;">04/16/20</div>
<div class="t" style="left:1349px;top:710.6px;font-size:13.33px;line-height:13.33px;font-weight:400;color:#111;width:74px;text-align:right;">10</div>
<div class="t" style="left:82px;top:738.0px;font-size:13px;line-height:13px;font-weight:400;color:#959595;width:42px;text-align:right;">20</div>
<div class="t" style="left:236px;top:735.6px;font-size:13.33px;line-height:13.33px;font-weight:700;color:#111;">Sprint 3</div>
<div class="t" style="left:546px;top:735.6px;font-size:13.33px;line-height:13.33px;font-weight:700;color:#111;">Sprint 3</div>
<div class="t" style="left:973px;top:735.6px;font-size:13.33px;line-height:13.33px;font-weight:400;color:#111;width:140px;text-align:center;">Total Story Points: 0</div>
<div class="t" style="left:1193px;top:735.6px;font-size:13.33px;line-height:13.33px;font-weight:400;color:#111;width:75px;text-align:center;">04/17/20</div>
<div class="t" style="left:1269px;top:735.6px;font-size:13.33px;line-height:13.33px;font-weight:400;color:#111;width:79px;text-align:center;">04/30/20</div>
<div class="t" style="left:1349px;top:735.6px;font-size:13.33px;line-height:13.33px;font-weight:400;color:#111;width:74px;text-align:right;">10</div>
<div class="t" style="left:82px;top:763.0px;font-size:13px;line-height:13px;font-weight:400;color:#959595;width:42px;text-align:right;">22</div>
<div class="t" style="left:236px;top:760.6px;font-size:13.33px;line-height:13.33px;font-weight:700;color:#111;">Sprint 4</div>
<div class="t" style="left:546px;top:760.6px;font-size:13.33px;line-height:13.33px;font-weight:700;color:#111;">Sprint 4</div>
<div class="t" style="left:973px;top:760.6px;font-size:13.33px;line-height:13.33px;font-weight:400;color:#111;width:140px;text-align:center;">Total Story Points: 0</div>
<div class="t" style="left:1193px;top:760.6px;font-size:13.33px;line-height:13.33px;font-weight:400;color:#111;width:75px;text-align:center;">05/01/20</div>
<div class="t" style="left:1269px;top:760.6px;font-size:13.33px;line-height:13.33px;font-weight:400;color:#111;width:79px;text-align:center;">05/14/20</div>
<div class="t" style="left:1349px;top:760.6px;font-size:13.33px;line-height:13.33px;font-weight:400;color:#111;width:74px;text-align:right;">10</div>
<div class="t" style="left:82px;top:788.0px;font-size:13px;line-height:13px;font-weight:400;color:#959595;width:42px;text-align:right;">24</div>
<div class="t" style="left:236px;top:785.6px;font-size:13.33px;line-height:13.33px;font-weight:700;color:#111;">Backlog</div>
<div class="t" style="left:546px;top:785.6px;font-size:13.33px;line-height:13.33px;font-weight:700;color:#111;">Add to Backlog</div>
<div class="t" style="left:973px;top:785.6px;font-size:13.33px;line-height:13.33px;font-weight:400;color:#111;width:140px;text-align:center;">Total Story Points: 0</div>
<div class="t" style="left:1193px;top:785.6px;font-size:13.33px;line-height:13.33px;font-weight:400;color:#111;width:75px;text-align:center;"></div>
<div class="t" style="left:1269px;top:785.6px;font-size:13.33px;line-height:13.33px;font-weight:400;color:#111;width:79px;text-align:center;"></div>
<div class="t" style="left:1349px;top:785.6px;font-size:13.33px;line-height:13.33px;font-weight:400;color:#111;width:74px;text-align:right;">1</div>
<div class="t" style="left:82px;top:813.0px;font-size:13px;line-height:13px;font-weight:400;color:#959595;width:42px;text-align:right;">25</div>
<div class="t" style="left:236px;top:811px;font-size:13.33px;line-height:13.33px;font-weight:400;color:#111;">Backlog</div>
<div class="t" style="left:561px;top:811px;font-size:13.33px;line-height:13.33px;font-weight:400;color:#111;">(Enter Task)</div>
<div class="t" style="left:839px;top:811px;font-size:13.33px;line-height:13.33px;font-weight:400;color:#111;">Shari Wise</div>
<div class="t" style="left:973px;top:811px;font-size:13.33px;line-height:13.33px;font-weight:400;color:#111;width:140px;text-align:center;"></div>
<div class="t" style="left:1120px;top:811px;font-size:13.33px;line-height:13.33px;font-weight:400;color:#111;">Feature D</div>
<div class="t" style="left:1193px;top:811px;font-size:13.33px;line-height:13.33px;font-weight:400;color:#111;width:75px;text-align:center;"></div>
<div class="t" style="left:1269px;top:811px;font-size:13.33px;line-height:13.33px;font-weight:400;color:#111;width:79px;text-align:center;"></div>
<div class="t" style="left:1349px;top:811px;font-size:13.33px;line-height:13.33px;font-weight:400;color:#111;width:74px;text-align:right;">1</div>
<!--RIGHTPANEL-->
<div class="a" style="left:1472px;top:142px;width:8px;height:581px;background:linear-gradient(to right,rgba(0,0,0,0.035),rgba(0,0,0,0.065))"></div>
<div class="a" style="left:1472px;top:723px;width:60px;height:30px;background:linear-gradient(to bottom,rgba(0,0,0,0.035),rgba(0,0,0,0))"></div>
<div class="a" style="left:1480px;top:142px;width:52px;height:581px;background:#fff"></div>
<svg class="a" style="left:0px;top:0px;pointer-events:none;" width="1532" height="850" viewBox="0 0 1532 850">
<path d="M1497.6 160.8 H1514.5 Q1515.3 160.8 1515.3 161.6 V173.3 Q1515.3 174.1 1514.5 174.1 H1504.2 L1500.6 176.6 V174.1 H1497.6 Q1496.8 174.1 1496.8 173.3 V161.6 Q1496.8 160.8 1497.6 160.8 Z" fill="none" stroke="#3a3a3a" stroke-width="1.5" stroke-linejoin="round"/>
<path d="M1505.6 221.6 L1503 224.2 A3.8 3.8 0 0 1 1497.6 218.8 L1509.3 207.2 A3.8 3.8 0 0 1 1514.7 212.6 L1508.4 218.8 A2.26 2.26 0 0 1 1505.2 215.6 L1509.3 211.5" fill="none" stroke="#3a3a3a" stroke-width="1.5" stroke-linecap="round"/>
<path d="M1501 254.7 H1511 M1499.9 257.9 H1512.1" stroke="#3a3a3a" stroke-width="1.3"/>
<path d="M1497 260.9 H1515 V268.2 Q1515 273.2 1510 273.2 H1497 Z" fill="none" stroke="#3a3a3a" stroke-width="1.5" stroke-linejoin="round"/>
<path d="M1515 268.4 H1510.2 V273.2" fill="none" stroke="#3a3a3a" stroke-width="1.3"/>
<path d="M1505.1 303.7 A8 8 0 0 1 1511.5 317.4" fill="none" stroke="#3a3a3a" stroke-width="1.5"/>
<path d="M1510.8 314.3 V318.2 H1514.9" fill="none" stroke="#3a3a3a" stroke-width="1.5"/>
<path d="M1506.5 319.7 A8 8 0 0 1 1500.1 306" fill="none" stroke="#3a3a3a" stroke-width="1.5"/>
<path d="M1497.1 305.4 H1501.2 V309.5" fill="none" stroke="#3a3a3a" stroke-width="1.5"/>
<path d="M1503 312.2 L1505.4 314.6 L1509.3 310.4" fill="none" stroke="#3a3a3a" stroke-width="1.5"/>
<path d="M1498.6 350.7 H1508.8 Q1513.4 350.7 1513.4 355.3 V369.4 H1498.6 Z" fill="none" stroke="#3a3a3a" stroke-width="1.5" stroke-linejoin="round"/><path d="M1508.9 350.7 V355.2 H1513.4" fill="none" stroke="#3a3a3a" stroke-width="1.3"/>
<path d="M1506 366.6 V359.6 M1503.2 362.2 L1506 359.4 L1508.8 362.2" fill="none" stroke="#3a3a3a" stroke-width="1.6"/>
<circle cx="1506" cy="407.6" r="9.3" fill="none" stroke="#3a3a3a" stroke-width="1.5"/>
<path d="M1499.6 408 H1503 L1504.8 404.4 L1507.4 411 L1509.2 407.8 H1512.4" fill="none" stroke="#3a3a3a" stroke-width="1.4" stroke-linejoin="round"/>
<path d="M1500.8 449.2 V447.3 Q1500.8 446.7 1501.4 446.7 H1514.8 Q1515.4 446.7 1515.4 447.3 V459.6 Q1515.4 465 1510 465 H1501.4 Q1500.8 465 1500.8 464.4 V462.7" fill="none" stroke="#3a3a3a" stroke-width="1.5"/>
<path d="M1509.8 465 V460 H1515.4" fill="none" stroke="#3a3a3a" stroke-width="1.4"/>
<rect x="1496.8" y="449.4" width="7.6" height="13.2" rx="1.2" fill="#fff" stroke="#3a3a3a" stroke-width="1.5"/>
<path d="M1499.4 453.2 H1501.8 M1499.4 456 H1501.8 M1499.4 458.8 H1501.8" stroke="#3a3a3a" stroke-width="1.3" stroke-linecap="round"/>
<path d="M1506 494 C1502.8 494 1501 496.5 1501 500 C1501 503.5 1503.5 506.5 1506 508.8 C1508.5 506.5 1511 503.5 1511 500 C1511 496.5 1509.2 494 1506 494 Z" fill="#38bdf8"/>
<path d="M1500.5 495.3 C1498.9 496.7 1498.4 498.7 1498.7 501 C1499.1 504 1500.9 506.6 1503.6 508.8 M1511.5 495.3 C1513.1 496.7 1513.6 498.7 1513.3 501 C1512.9 504 1511.1 506.6 1508.4 508.8" fill="none" stroke="#38bdf8" stroke-width="1.6"/>
<path d="M1504 510.9 H1508.2 V512.3 A2.1 1.5 0 0 1 1504 512.3 Z" fill="#38bdf8"/>
<rect x="1496.9" y="542.8" width="18.4" height="18.2" rx="1.2" fill="none" stroke="#3a3a3a" stroke-width="1.6"/>
<path d="M1501.4 557.4 V551.6 M1504.4 557.4 V546.6 M1507.4 557.4 V549.6 M1510.5 557.4 V552.6" stroke="#3a3a3a" stroke-width="1.4" stroke-linecap="round"/>
<rect x="1493" y="576" width="26" height="1" fill="#dedede"/>
<rect x="1499.2" y="595" width="6" height="6" fill="#808080"/><rect x="1506" y="595" width="6" height="6" fill="#808080"/>
<rect x="1499.2" y="602.2" width="6" height="6" fill="#808080"/><rect x="1506" y="602.2" width="6" height="6" fill="#808080"/>
<path d="M1505 643.9 H1511 V650 M1501.8 647.1 H1507.8 V653.2 M1498.6 650.3 H1504.6 V656.4" fill="none" stroke="#878787" stroke-width="2"/>
<path d="M1500.6 693.6 C1502 691.6 1504.6 691.4 1505.8 692.8 C1507 691.4 1509.6 691.6 1510.6 693.4 C1512.6 693.2 1514 694.6 1513.8 696.4 C1514 698.6 1512.4 700 1510.4 699.8 C1509.2 701.6 1506.4 701.8 1505 700.6 C1503.4 702 1500.6 701.8 1499.6 700 C1497.8 699.8 1497.6 697.4 1498.4 696.4 C1497.8 694.8 1499 693.4 1500.6 693.6 Z" fill="#828282"/>
</svg>
<div class="a" style="left:58px;top:838px;width:23px;height:12px;border-top:1px solid #cfcfcf;border-right:1px solid #cfcfcf;background:#f6f5f3"></div>
<svg class="a" style="left:58px;top:838px;" width="23" height="12" viewBox="0 0 23 12"><path d="M5 3 L9.5 7.5 M5 3 V6 M5 3 H8 M17 3 L12.5 7.5 M17 3 V6 M17 3 H14" fill="none" stroke="#333" stroke-width="1.6"/><path d="M9 10.5 L7 12.5 M13 10.5 L15 12.5" stroke="#333" stroke-width="1.6"/></svg>
</body></html>
